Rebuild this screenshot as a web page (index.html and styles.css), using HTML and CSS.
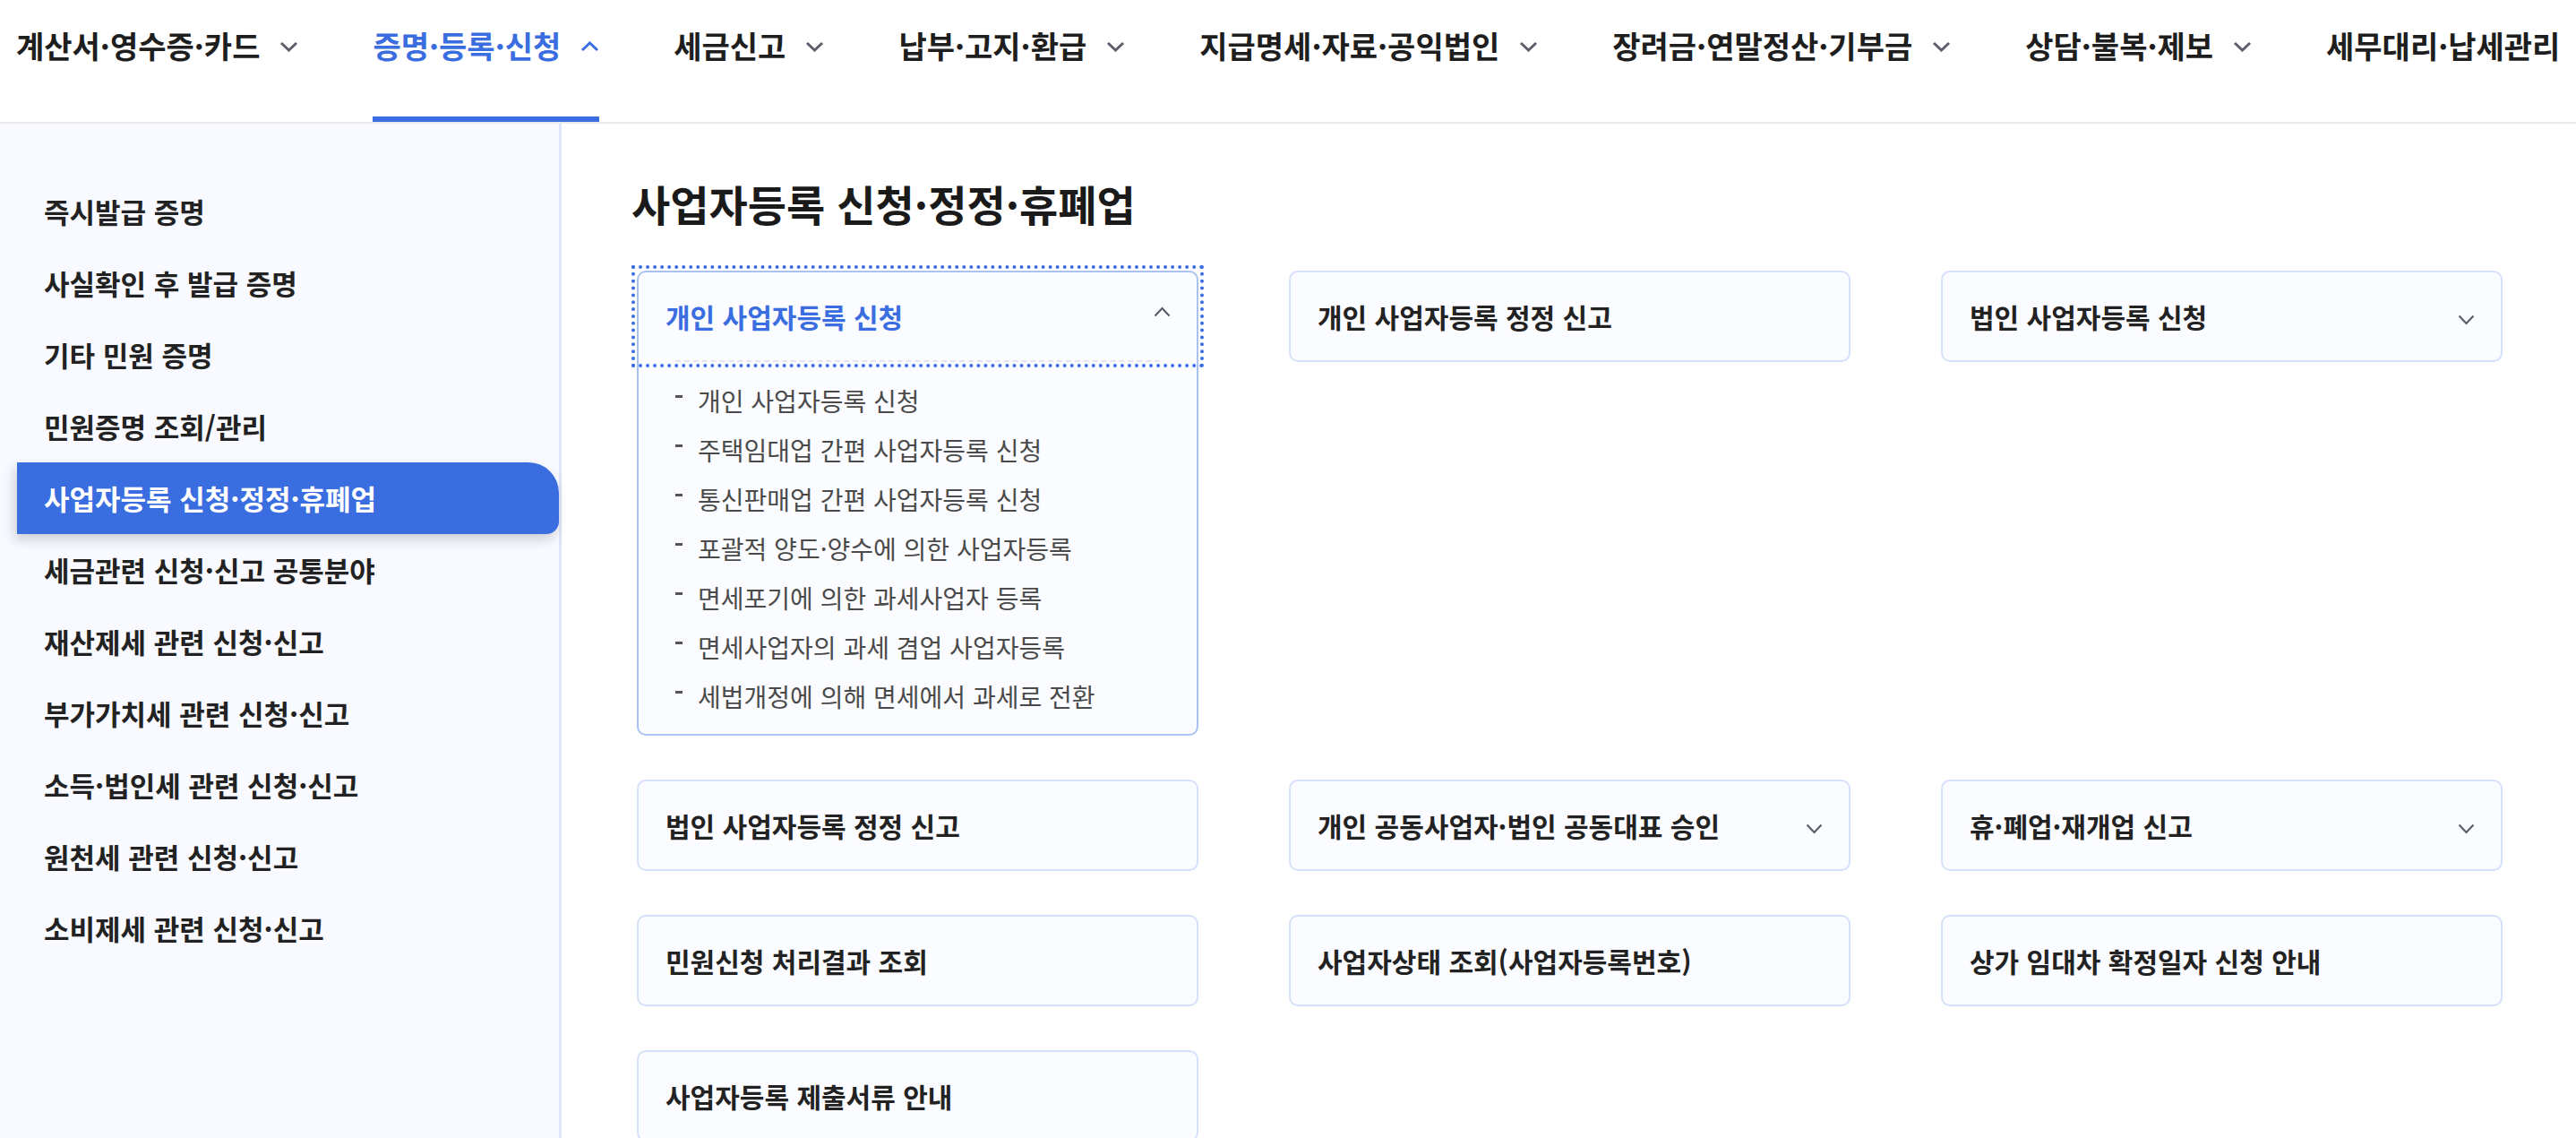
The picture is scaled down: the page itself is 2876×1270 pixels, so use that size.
FILE: index.html
```html
<!DOCTYPE html>
<html lang="ko">
<head>
<meta charset="utf-8">
<title>사업자등록 신청·정정·휴폐업</title>
<link rel="stylesheet" href="styles.css">
</head>
<body>
<header class="gnb">
  <ul class="gnb-list">
    <li class="gnb-item"><a class="gnb-link"><span>계산서·영수증·카드</span><svg class="gnb-chev" viewBox="0 0 21 12"><path d="M2 2 L10.5 10 L19 2"/></svg></a></li>
    <li class="gnb-item is-active"><a class="gnb-link"><span>증명·등록·신청</span><svg class="gnb-chev" viewBox="0 0 21 12"><path d="M2 10 L10.5 2 L19 10"/></svg></a></li>
    <li class="gnb-item"><a class="gnb-link"><span>세금신고</span><svg class="gnb-chev" viewBox="0 0 21 12"><path d="M2 2 L10.5 10 L19 2"/></svg></a></li>
    <li class="gnb-item"><a class="gnb-link"><span>납부·고지·환급</span><svg class="gnb-chev" viewBox="0 0 21 12"><path d="M2 2 L10.5 10 L19 2"/></svg></a></li>
    <li class="gnb-item"><a class="gnb-link"><span>지급명세·자료·공익법인</span><svg class="gnb-chev" viewBox="0 0 21 12"><path d="M2 2 L10.5 10 L19 2"/></svg></a></li>
    <li class="gnb-item"><a class="gnb-link"><span>장려금·연말정산·기부금</span><svg class="gnb-chev" viewBox="0 0 21 12"><path d="M2 2 L10.5 10 L19 2"/></svg></a></li>
    <li class="gnb-item"><a class="gnb-link"><span>상담·불복·제보</span><svg class="gnb-chev" viewBox="0 0 21 12"><path d="M2 2 L10.5 10 L19 2"/></svg></a></li>
    <li class="gnb-item"><a class="gnb-link"><span>세무대리·납세관리</span></a></li>
  </ul>
</header>
<div class="layout">
  <aside class="lnb">
    <ul class="lnb-list">
      <li class="lnb-item">즉시발급 증명</li>
      <li class="lnb-item">사실확인 후 발급 증명</li>
      <li class="lnb-item">기타 민원 증명</li>
      <li class="lnb-item">민원증명 조회/관리</li>
      <li class="lnb-item is-active">사업자등록 신청·정정·휴폐업</li>
      <li class="lnb-item">세금관련 신청·신고 공통분야</li>
      <li class="lnb-item">재산제세 관련 신청·신고</li>
      <li class="lnb-item">부가가치세 관련 신청·신고</li>
      <li class="lnb-item">소득·법인세 관련 신청·신고</li>
      <li class="lnb-item">원천세 관련 신청·신고</li>
      <li class="lnb-item">소비제세 관련 신청·신고</li>
    </ul>
  </aside>
  <main class="content">
    <h2 class="page-title">사업자등록 신청·정정·휴폐업</h2>
    <div class="card-grid">
      <div class="card is-open">
        <button class="card-head is-focus"><span class="card-title">개인 사업자등록 신청</span><svg class="card-chev up" viewBox="0 0 19 12"><path d="M1.5 10.5 L9.5 2 L17.5 10.5"/></svg></button>
        <ul class="sub-list">
          <li class="sub-item">개인 사업자등록 신청</li>
          <li class="sub-item">주택임대업 간편 사업자등록 신청</li>
          <li class="sub-item">통신판매업 간편 사업자등록 신청</li>
          <li class="sub-item">포괄적 양도·양수에 의한 사업자등록</li>
          <li class="sub-item">면세포기에 의한 과세사업자 등록</li>
          <li class="sub-item">면세사업자의 과세 겸업 사업자등록</li>
          <li class="sub-item">세법개정에 의해 면세에서 과세로 전환</li>
        </ul>
      </div>
      <div class="card"><button class="card-head"><span class="card-title">개인 사업자등록 정정 신고</span></button></div>
      <div class="card"><button class="card-head"><span class="card-title">법인 사업자등록 신청</span><svg class="card-chev down" viewBox="0 0 19 12"><path d="M1.5 1.5 L9.5 10 L17.5 1.5"/></svg></button></div>
      <div class="card"><button class="card-head"><span class="card-title">법인 사업자등록 정정 신고</span></button></div>
      <div class="card"><button class="card-head"><span class="card-title">개인 공동사업자·법인 공동대표 승인</span><svg class="card-chev down" viewBox="0 0 19 12"><path d="M1.5 1.5 L9.5 10 L17.5 1.5"/></svg></button></div>
      <div class="card"><button class="card-head"><span class="card-title">휴·폐업·재개업 신고</span><svg class="card-chev down" viewBox="0 0 19 12"><path d="M1.5 1.5 L9.5 10 L17.5 1.5"/></svg></button></div>
      <div class="card"><button class="card-head"><span class="card-title">민원신청 처리결과 조회</span></button></div>
      <div class="card"><button class="card-head"><span class="card-title">사업자상태 조회(사업자등록번호)</span></button></div>
      <div class="card"><button class="card-head"><span class="card-title">상가 임대차 확정일자 신청 안내</span></button></div>
      <div class="card"><button class="card-head"><span class="card-title">사업자등록 제출서류 안내</span></button></div>
    </div>
  </main>
</div>
</body>
</html>
```
FILE: styles.css
```css
* { box-sizing: border-box; }
html, body { margin: 0; padding: 0; }
body {
  font-family: "Noto Sans CJK KR", "Noto Sans", sans-serif;
  color: #222;
  background: #fff;
  overflow: hidden;
}
ul { list-style: none; margin: 0; padding: 0; }

/* top navigation */
.gnb {
  height: 138px;
  border-bottom: 2px solid #ebebeb;
  background: #fff;
}
.gnb-list {
  display: flex;
  gap: 83px;
  padding-left: 18px;
  height: 136px;
  white-space: nowrap;
}
.gnb-item {
  display: flex;
  height: 136px;
}
.gnb-link {
  display: flex;
  align-items: center;
  gap: 22px;
  height: 48px;
  margin-top: 26px;
  font-size: 34px;
  font-weight: 700;
  letter-spacing: 0;
  color: #1e1e1e;
}
.gnb-chev {
  width: 21px;
  height: 12px;
  fill: none;
  stroke: #5c5e6b;
  stroke-width: 3;
  margin-top: 3px;
}
.gnb-item.is-active {
  border-bottom: 6px solid #3a6ee0;
  border-radius: 4px 4px 0 0;
}
.gnb-item.is-active .gnb-link { color: #3a6ee0; }
.gnb-item.is-active .gnb-chev { stroke: #3a6ee0; }

/* layout */
.layout {
  display: flex;
  min-height: calc(100vh - 138px);
}

/* left menu */
.lnb {
  flex: 0 0 627px;
  background: #f8faff;
  border-right: 3px solid #dde6fb;
  padding-top: 58px;
}
.lnb-item {
  height: 80px;
  line-height: 80px;
  padding-left: 49px;
  font-size: 31px;
  font-weight: 700;
  letter-spacing: 0;
  color: #222;
  white-space: nowrap;
}
.lnb-item.is-active {
  margin-left: 19px;
  padding-left: 30px;
  background: #3a6de0;
  color: #fff;
  border-radius: 0 34px 14px 0;
  box-shadow: -3px 6px 14px rgba(0, 0, 0, 0.18);
}

/* content */
.content {
  flex: 1;
  padding: 0 82px 0 84px;
}
.page-title {
  margin: 59px 0 45px -6px;
  font-size: 47px;
  line-height: 60px;
  font-weight: 700;
  letter-spacing: 0;
  color: #1a1a1a;
}
.card-grid {
  display: grid;
  grid-template-columns: repeat(3, 1fr);
  column-gap: 101px;
  row-gap: 49px;
  align-items: start;
}
.card {
  border: 2px solid #d5e1fa;
  border-radius: 10px;
  background: #fbfcff;
}
.card.is-open { border-color: #a9c3f0; }
.card-head {
  display: flex;
  align-items: center;
  justify-content: space-between;
  width: 100%;
  height: 98px;
  padding: 0 29px 0 30px;
  border: 0;
  background: transparent;
  font-family: inherit;
  text-align: left;
  cursor: pointer;
}
.card-head.is-focus {
  outline: 4px dotted #3a6ee0;
  outline-offset: 4px;
  border-radius: 0;
}
.card-title {
  font-size: 30px;
  font-weight: 700;
  letter-spacing: 0;
  color: #222;
  white-space: nowrap;
}
.card.is-open .card-title { color: #3a6ee0; }
.card-chev {
  flex: 0 0 auto;
  width: 19px;
  height: 12px;
  fill: none;
  stroke: #555a66;
  stroke-width: 2;
}
.card-chev.down { margin-top: 8px; }
.card-chev.up { margin-top: -11px; }

.sub-list {
  margin: 0 41px;
  padding: 15px 0 15px;
  border-top: 2px dashed #e0e5f0;
}
.sub-item {
  display: flex;
  align-items: center;
  height: 55px;
  font-size: 28px;
  letter-spacing: 0;
  color: #4a4a4a;
  white-space: nowrap;
}
.sub-item::before {
  content: "";
  flex: 0 0 8px;
  height: 3px;
  margin: -8px 17px 0 0;
  background: #555;
}
```
